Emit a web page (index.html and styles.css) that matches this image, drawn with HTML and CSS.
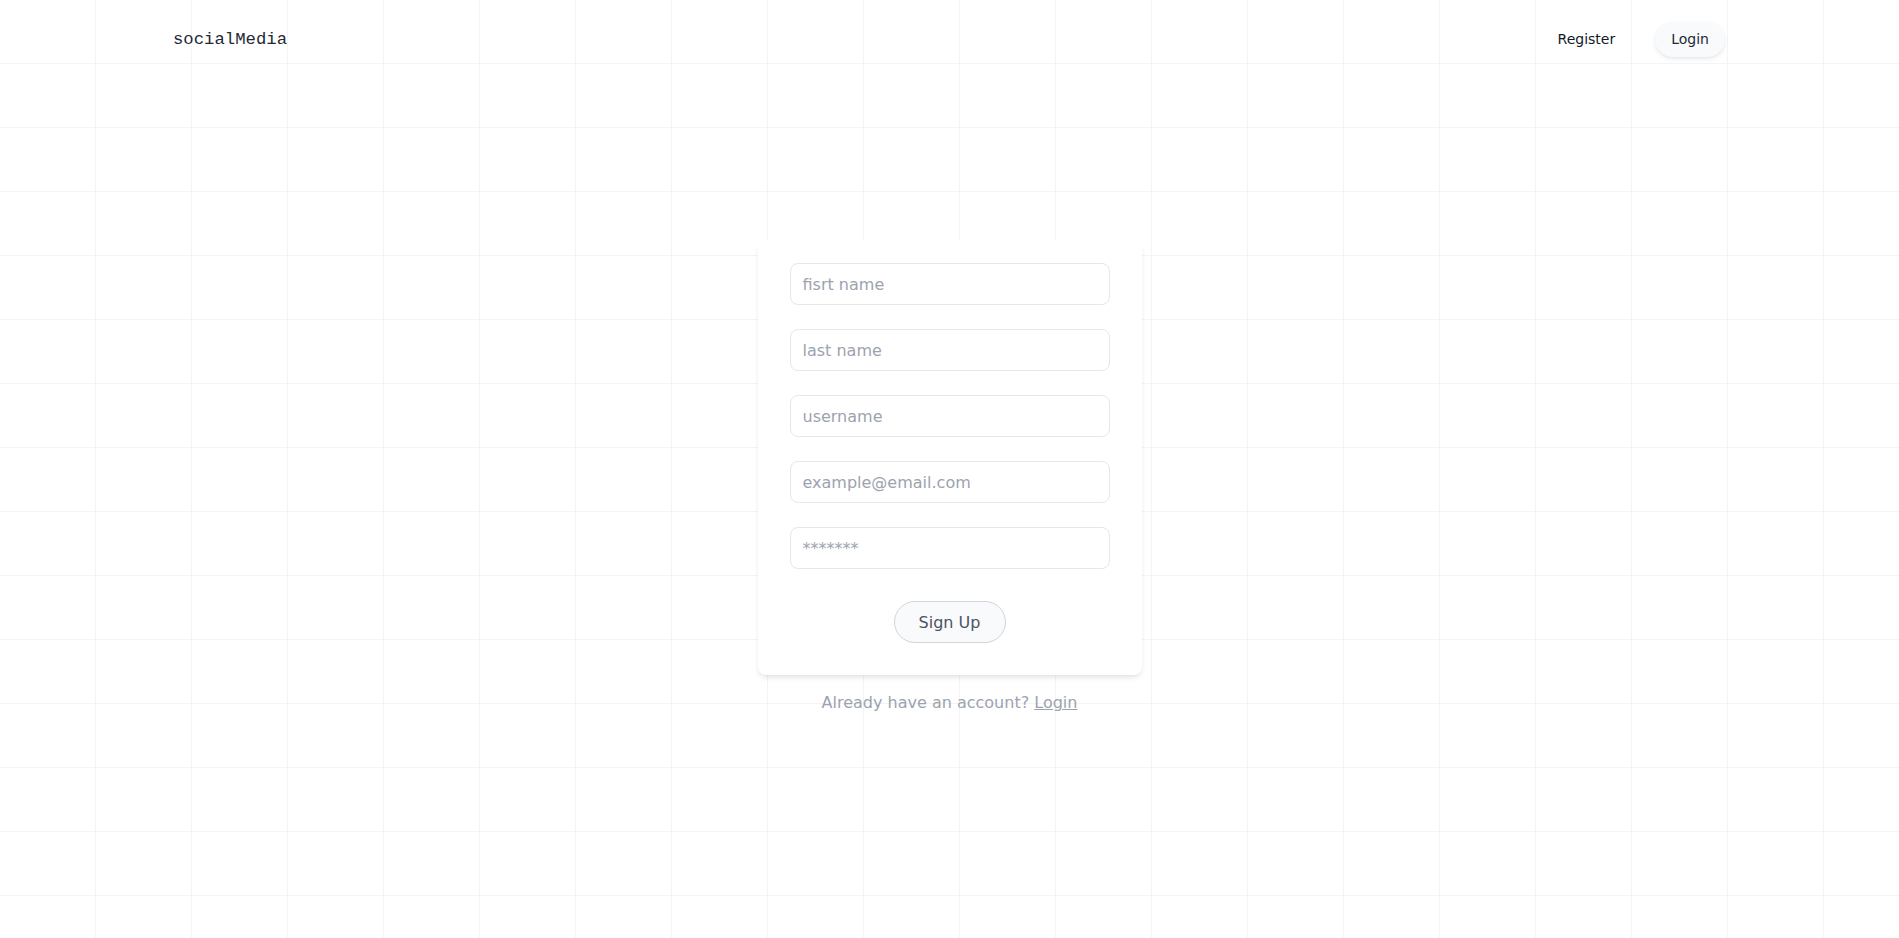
FILE: index.html
```html
<!DOCTYPE html>
<html lang="en">
<head>
<meta charset="utf-8">
<title>socialMedia</title>
<link rel="stylesheet" href="styles.css">
</head>
<body>
<header class="topbar">
  <span class="logo">socialMedia</span>
  <nav class="nav">
    <a class="nav-link" href="#">Register</a>
    <a class="nav-btn" href="#">Login</a>
  </nav>
</header>
<main class="main">
  <form class="card">
    <input class="field" type="text" placeholder="fisrt name">
    <input class="field" type="text" placeholder="last name">
    <input class="field" type="text" placeholder="username">
    <input class="field" type="email" placeholder="example@email.com">
    <input class="field" type="password" placeholder="*******">
    <button class="submit" type="button">Sign Up</button>
  </form>
  <p class="alt">Already have an account? <a class="alt-link" href="#">Login</a></p>
</main>
</body>
</html>
```
FILE: styles.css
```css
html, body {
  margin: 0;
  padding: 0;
}
body {
  min-height: 100vh;
  font-family: "DejaVu Sans", sans-serif;
  background-color: #ffffff;
  background-image:
    linear-gradient(to right, transparent 95px, #f4f4f5 95px, #f4f4f5 96px, transparent 96px),
    linear-gradient(to bottom, transparent 63px, #f4f4f5 63px, #f4f4f5 64px, transparent 64px);
  background-size: 96px 64px;
}
.topbar {
  display: flex;
  align-items: center;
  justify-content: space-between;
  padding: 21px 174px 0 173px;
  height: 36px;
}
.logo {
  font-family: "Liberation Mono", monospace;
  font-size: 17.3px;
  color: #1f2937;
  line-height: 35px;
}
.nav {
  display: flex;
  align-items: center;
  gap: 40px;
}
.nav-link {
  font-size: 14px;
  color: #111827;
  text-decoration: none;
  line-height: 20px;
}
.nav-btn {
  font-size: 14px;
  color: #1f2937;
  text-decoration: none;
  line-height: 19px;
  padding: 8px 16px;
  border-radius: 9999px;
  background: #f9fafb;
  box-shadow: 0 2px 4px 0 rgba(0,0,0,0.08), 0 1px 2px -1px rgba(0,0,0,0.08);
}
.main {
  display: flex;
  flex-direction: column;
  align-items: center;
  padding-top: 184px;
}
.card {
  width: 384px;
  box-sizing: border-box;
  padding: 22px 32px 32px;
  background: #ffffff;
  border-radius: 8px;
  box-shadow: 0 4px 6px -1px rgba(0,0,0,0.08), 0 2px 4px -2px rgba(0,0,0,0.08);
  display: flex;
  flex-direction: column;
  align-items: center;
  gap: 24px;
}
.field {
  width: 320px;
  height: 42px;
  box-sizing: border-box;
  border: 1px solid #e5e7eb;
  border-radius: 8px;
  padding: 0 12px;
  font-family: "DejaVu Sans", sans-serif;
  font-size: 16px;
  color: #111827;
  background: #ffffff;
  outline: none;
}
.field::placeholder {
  color: #9ca3af;
}
.submit {
  margin-top: 8px;
  width: 112px;
  height: 42px;
  box-sizing: border-box;
  border: 1px solid #d1d5db;
  border-radius: 9999px;
  background: #f9fafb;
  color: #4b5563;
  font-family: "DejaVu Sans", sans-serif;
  font-size: 16px;
}
.alt {
  margin: 16px 0 0;
  font-size: 16px;
  line-height: 24px;
  color: #9ca3af;
}
.alt-link {
  color: #9ca3af;
  text-decoration: underline;
}
```
